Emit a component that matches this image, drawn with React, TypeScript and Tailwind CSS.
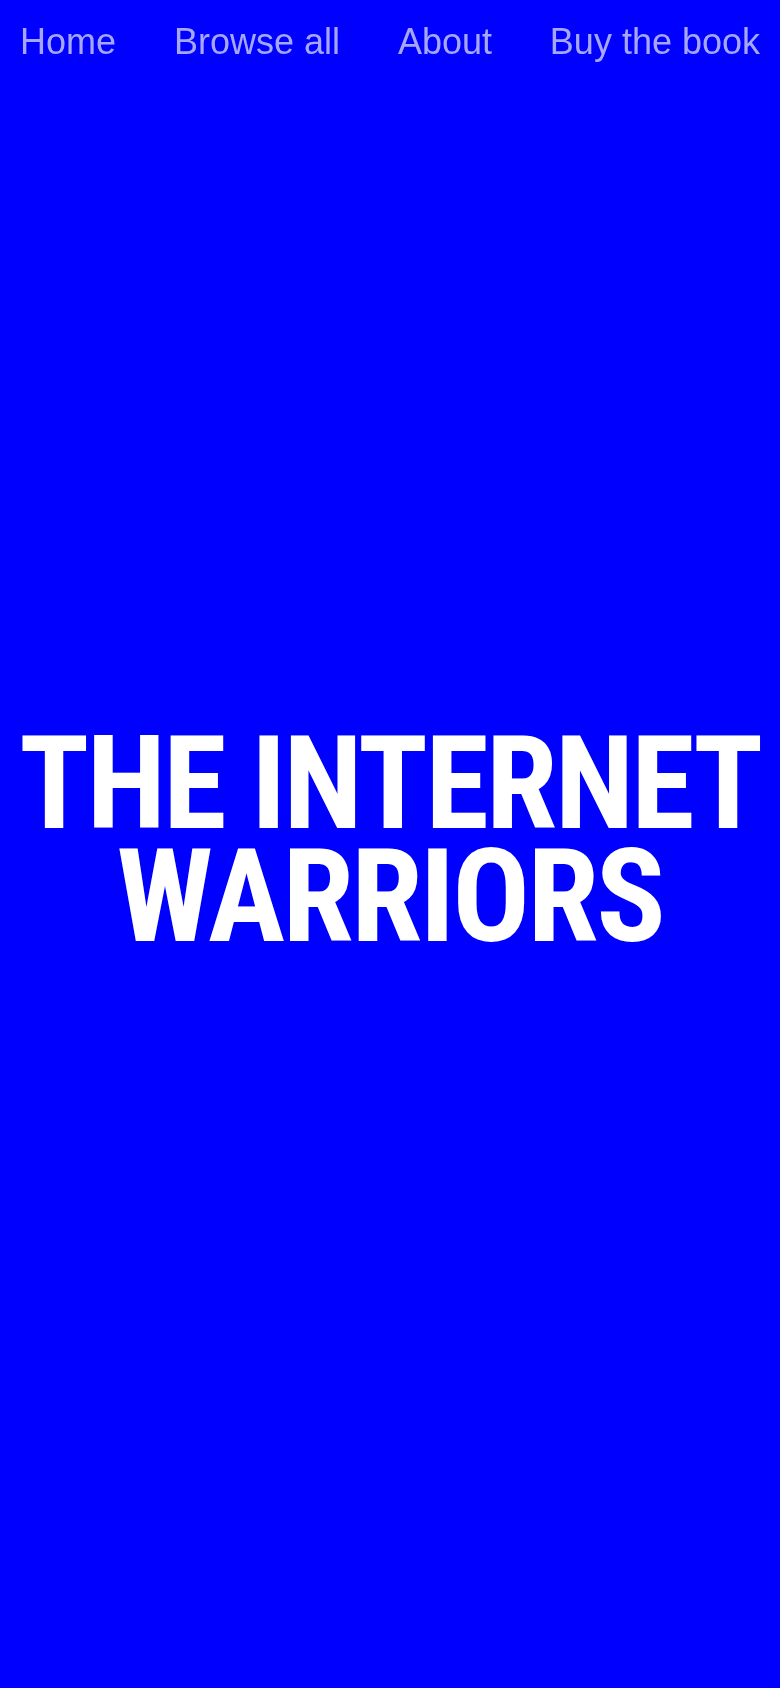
export default function App() {
  const links = ["Home", "Browse all", "About", "Buy the book"];

  return (
    <div className="min-h-screen bg-[#0000ff]">
      {/* NAV */}
      <header className="fixed top-0 left-0 right-0 z-10">
        <nav className="flex justify-between px-5 pt-6">
          {links.map((l) => (
            <a
              key={l}
              href="#"
              className="text-[36px] leading-[36px] text-[#a6a6ff] font-['Liberation_Sans',Arial,sans-serif]"
            >
              {l}
            </a>
          ))}
        </nav>
      </header>

      {/* HERO */}
      <main className="flex h-screen items-center justify-center pb-2">
        <h1 className="whitespace-nowrap text-center text-[129px] leading-[113px] font-bold tracking-[-0.02em] text-white font-['Roboto_Condensed',sans-serif]">
          THE INTERNET
          <br />
          WARRIORS
        </h1>
      </main>
    </div>
  );
}
